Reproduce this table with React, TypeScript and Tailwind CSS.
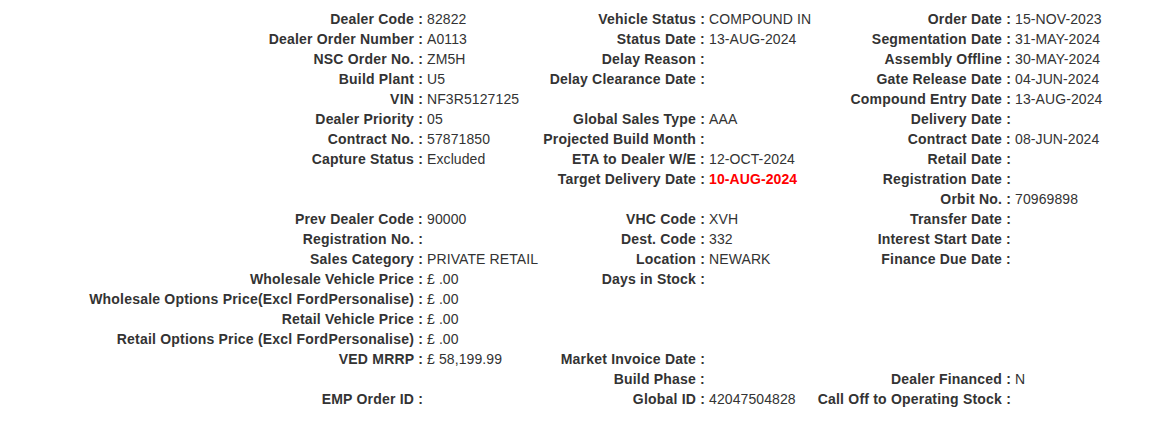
import React from "react";

type Cell = { l?: string; v?: string; red?: boolean } | null;

const rows: [Cell, Cell, Cell][] = [
  [{ l: "Dealer Code", v: "82822" }, { l: "Vehicle Status", v: "COMPOUND IN" }, { l: "Order Date", v: "15-NOV-2023" }],
  [{ l: "Dealer Order Number", v: "A0113" }, { l: "Status Date", v: "13-AUG-2024" }, { l: "Segmentation Date", v: "31-MAY-2024" }],
  [{ l: "NSC Order No.", v: "ZM5H" }, { l: "Delay Reason", v: "" }, { l: "Assembly Offline", v: "30-MAY-2024" }],
  [{ l: "Build Plant", v: "U5" }, { l: "Delay Clearance Date", v: "" }, { l: "Gate Release Date", v: "04-JUN-2024" }],
  [{ l: "VIN", v: "NF3R5127125" }, null, { l: "Compound Entry Date", v: "13-AUG-2024" }],
  [{ l: "Dealer Priority", v: "05" }, { l: "Global Sales Type", v: "AAA" }, { l: "Delivery Date", v: "" }],
  [{ l: "Contract No.", v: "57871850" }, { l: "Projected Build Month", v: "" }, { l: "Contract Date", v: "08-JUN-2024" }],
  [{ l: "Capture Status", v: "Excluded" }, { l: "ETA to Dealer W/E", v: "12-OCT-2024" }, { l: "Retail Date", v: "" }],
  [null, { l: "Target Delivery Date", v: "10-AUG-2024", red: true }, { l: "Registration Date", v: "" }],
  [null, null, { l: "Orbit No.", v: "70969898" }],
  [{ l: "Prev Dealer Code", v: "90000" }, { l: "VHC Code", v: "XVH" }, { l: "Transfer Date", v: "" }],
  [{ l: "Registration No.", v: "" }, { l: "Dest. Code", v: "332" }, { l: "Interest Start Date", v: "" }],
  [{ l: "Sales Category", v: "PRIVATE RETAIL" }, { l: "Location", v: "NEWARK" }, { l: "Finance Due Date", v: "" }],
  [{ l: "Wholesale Vehicle Price", v: "£ .00" }, { l: "Days in Stock", v: "" }, null],
  [{ l: "Wholesale Options Price(Excl FordPersonalise)", v: "£ .00" }, null, null],
  [{ l: "Retail Vehicle Price", v: "£ .00" }, null, null],
  [{ l: "Retail Options Price (Excl FordPersonalise)", v: "£ .00" }, null, null],
  [{ l: "VED MRRP", v: "£ 58,199.99" }, { l: "Market Invoice Date", v: "" }, null],
  [null, { l: "Build Phase", v: "" }, { l: "Dealer Financed", v: "N" }],
  [{ l: "EMP Order ID", v: "" }, { l: "Global ID", v: "42047504828" }, { l: "Call Off to Operating Stock", v: "" }],
];

const padClasses = ["pl-[4px]", "pl-[4px]", "pl-[4px]"];

export default function App() {
  return (
    <div className="w-[1169px] h-[444px] bg-white pt-[9px] font-['Liberation_Sans',Arial,sans-serif] text-[14px] leading-[20px] text-[#333]">
      <div className="grid grid-cols-[423px_119px_163px_110px_196px_1fr]">
        {rows.map((r, i) => (
          <React.Fragment key={i}>
            {r.map((c, j) => (
              <React.Fragment key={j}>
                <div className="h-[20px] text-right font-bold tracking-[0.2px] whitespace-nowrap">
                  {c ? `${c.l} :` : ""}
                </div>
                <div
                  className={`h-[20px] whitespace-nowrap tracking-[0.1px] ${padClasses[j]} ${
                    c && c.red ? "text-[#ff0000] font-bold" : ""
                  }`}
                >
                  {c ? c.v : ""}
                </div>
              </React.Fragment>
            ))}
          </React.Fragment>
        ))}
      </div>
    </div>
  );
}
